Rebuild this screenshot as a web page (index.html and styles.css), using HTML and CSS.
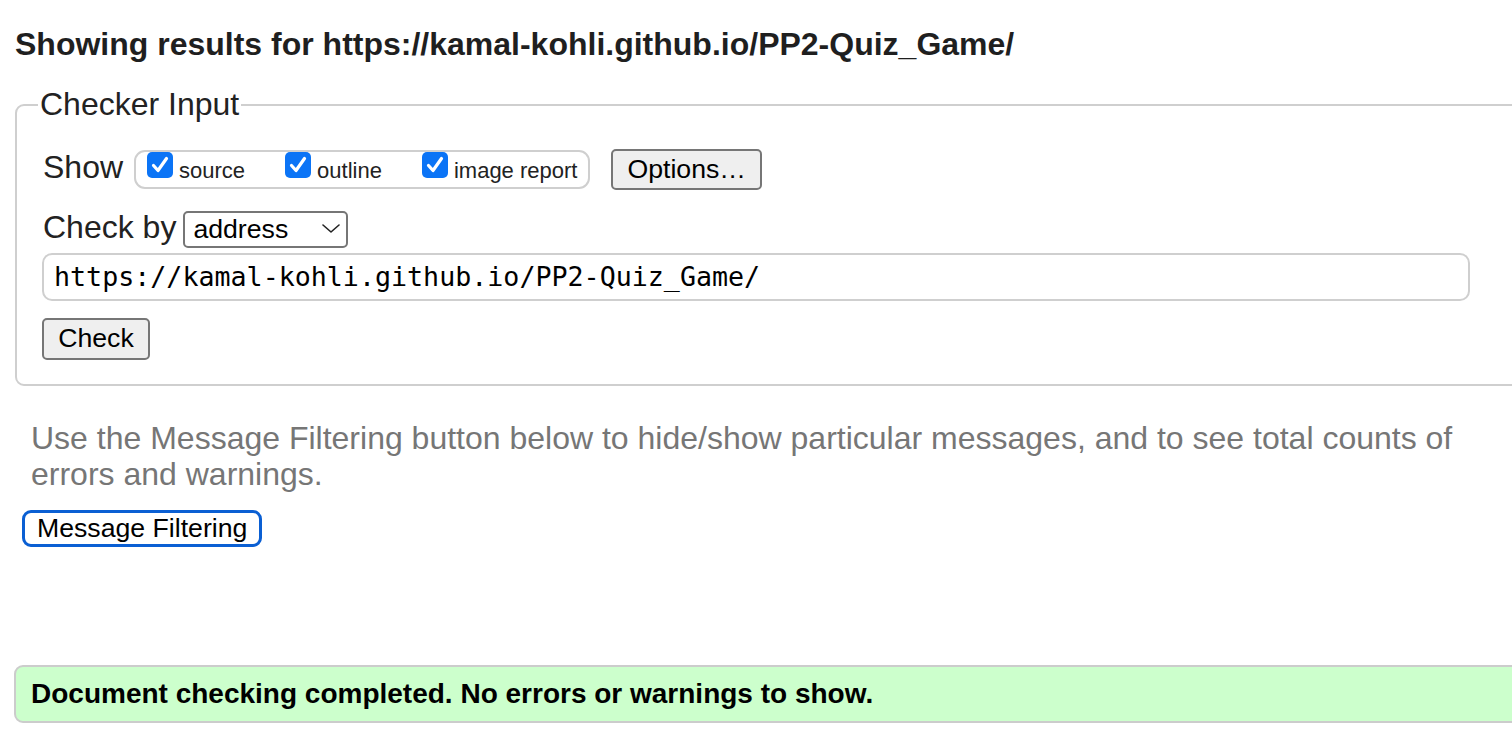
FILE: index.html
```html
<!DOCTYPE html>
<html lang="en">
<head>
<meta charset="utf-8">
<title>Nu Html Checker</title>
<link rel="stylesheet" href="styles.css">
</head>
<body>
<div class="page">
  <h2 class="title">Showing results for https://kamal-kohli.github.io/PP2-Quiz_Game/</h2>

  <fieldset class="checker">
    <legend class="checker-legend">Checker Input</legend>

    <div class="row show-row">
      <span class="row-label">Show</span>
      <span class="opt-group">
        <span class="cb"><svg viewBox="0 0 26 26" width="26" height="26"><path d="M6.5 13.5 L11 18.5 L19.5 6.5" fill="none" stroke="#fff" stroke-width="3.2" stroke-linecap="round" stroke-linejoin="round"/></svg></span>
        <span class="cb-label">source</span>
        <span class="cb"><svg viewBox="0 0 26 26" width="26" height="26"><path d="M6.5 13.5 L11 18.5 L19.5 6.5" fill="none" stroke="#fff" stroke-width="3.2" stroke-linecap="round" stroke-linejoin="round"/></svg></span>
        <span class="cb-label">outline</span>
        <span class="cb"><svg viewBox="0 0 26 26" width="26" height="26"><path d="M6.5 13.5 L11 18.5 L19.5 6.5" fill="none" stroke="#fff" stroke-width="3.2" stroke-linecap="round" stroke-linejoin="round"/></svg></span>
        <span class="cb-label last">image report</span>
      </span>
      <button class="btn options-btn" type="button">Options…</button>
    </div>

    <div class="row checkby-row">
      <span class="row-label">Check by</span>
      <span class="select-wrap">
        <select class="select">
          <option>address</option>
        </select>
        <svg class="chevron" viewBox="0 0 18 9" width="18" height="9"><path d="M1 1 L9 8 L17 1" fill="none" stroke="#222" stroke-width="1.6" stroke-linecap="round" stroke-linejoin="round"/></svg>
      </span>
    </div>

    <div class="url-field">https://kamal-kohli.github.io/PP2-Quiz_Game/</div>

    <div class="row submit-row">
      <button class="btn check-btn" type="button">Check</button>
    </div>
  </fieldset>

  <p class="hint">Use the Message Filtering button below to hide/show particular messages, and to see total counts of errors and warnings.</p>

  <button class="filter-btn" type="button">Message Filtering</button>

  <div class="success">Document checking completed. No errors or warnings to show.</div>
</div>
</body>
</html>
```

FILE: styles.css
```css
html, body {
  margin: 0;
  padding: 0;
  overflow: hidden;
  background: #fff;
}

body {
  font-family: "Liberation Sans", Arial, Helvetica, sans-serif;
  color: #222;
  font-size: 32px;
}

.page {
  width: 1600px;
}

.title {
  margin: 26px 0 23px 15px;
  font-size: 32px;
  font-weight: bold;
  line-height: normal;
  color: #1f1f1f;
}

.checker {
  margin: 0 0 0 15px;
  width: 1600px;
  box-sizing: border-box;
  border: 2px solid #cfcfcf;
  border-radius: 9px;
  padding: 26px 0 24px 26px;
}

.checker-legend {
  font-size: 32px;
  line-height: normal;
  padding: 0 2px;
  margin-left: -5px;
  color: #222;
}

.row {
  display: flex;
  align-items: baseline;
}

.row-label {
  font-size: 32px;
  line-height: normal;
  color: #222;
}

.show-row .row-label {
  margin-right: 11px;
}

.opt-group {
  display: flex;
  align-items: baseline;
  box-sizing: border-box;
  height: 39px;
  border: 2px solid #cfcfcf;
  border-radius: 11px;
  padding: 0 11px;
}

.cb {
  display: block;
  width: 26px;
  height: 26px;
  border-radius: 5px;
  background: #0b74f6;
  margin-right: 6px;
}

.cb svg {
  display: block;
}

.cb-label {
  font-size: 22px;
  line-height: normal;
  color: #222;
  margin-right: 40px;
}

.cb-label.last {
  margin-right: 0;
}

.btn {
  font-family: "Liberation Sans", Arial, Helvetica, sans-serif;
  font-size: 26.67px;
  line-height: normal;
  color: #000;
  background: #efefef;
  border: 2px solid #767676;
  border-radius: 5px;
  box-sizing: border-box;
  margin: 0;
}

.options-btn {
  margin-left: 21px;
  height: 41px;
  padding: 0 14px;
}

.checkby-row {
  margin-top: 19px;
}

.checkby-row .row-label {
  margin-right: 7px;
}

.select-wrap {
  position: relative;
  display: inline-block;
}

.select {
  appearance: none;
  -webkit-appearance: none;
  font-family: "Liberation Sans", Arial, Helvetica, sans-serif;
  font-size: 26.67px;
  color: #000;
  width: 165px;
  height: 37px;
  box-sizing: border-box;
  border: 2px solid #767676;
  border-radius: 5px;
  background: #fff;
  padding: 0 0 0 8px;
  margin: 0;
}

.chevron {
  position: absolute;
  right: 8px;
  top: 15px;
}

.url-field {
  margin-top: 5px;
  width: 1428px;
  height: 48px;
  box-sizing: border-box;
  border: 2px solid #cfcfcf;
  border-radius: 10px;
  padding: 0 10px;
  display: flex;
  align-items: center;
  font-family: "DejaVu Sans Mono", "Liberation Mono", monospace;
  font-size: 26.67px;
  color: #000;
  margin-left: -1px;
}

.submit-row {
  margin-top: 17px;
  margin-left: -1px;
}

.check-btn {
  width: 108px;
  height: 42px;
  padding: 0;
}

.hint {
  margin: 34px 0 18px 31px;
  width: 1440px;
  font-size: 32px;
  line-height: 36px;
  color: #767676;
}

.filter-btn {
  display: block;
  margin: 0 0 0 22px;
  height: 37px;
  box-sizing: border-box;
  padding: 0 12px;
  background: #fff;
  border: 3px solid #0a5fd3;
  border-radius: 9px;
  font-family: "Liberation Sans", Arial, Helvetica, sans-serif;
  font-size: 26.67px;
  line-height: normal;
  color: #000;
}

.success {
  margin: 118px 0 0 14px;
  width: 1600px;
  box-sizing: border-box;
  background: #ccffcc;
  border: 2px solid #cccccc;
  border-radius: 9px;
  padding: 11px 15px;
  font-size: 28px;
  font-weight: bold;
  line-height: normal;
  color: #000;
}
```
